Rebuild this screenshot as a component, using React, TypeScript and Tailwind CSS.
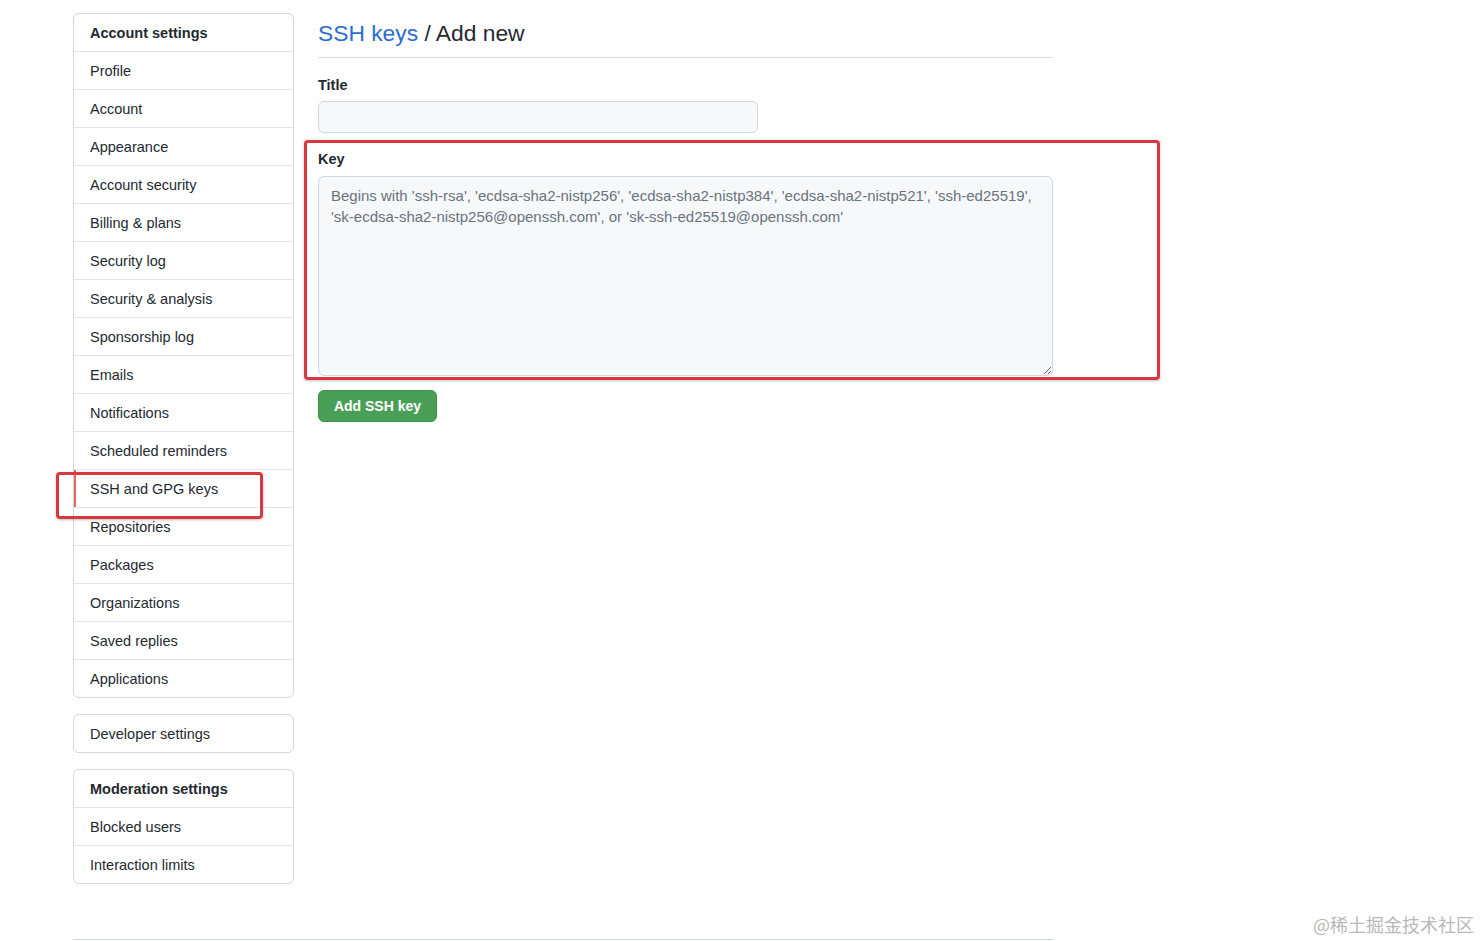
import React from "react";

// sidebar entries
const accountItems = [
  "Profile",
  "Account",
  "Appearance",
  "Account security",
  "Billing & plans",
  "Security log",
  "Security & analysis",
  "Sponsorship log",
  "Emails",
  "Notifications",
  "Scheduled reminders",
  "SSH and GPG keys",
  "Repositories",
  "Packages",
  "Organizations",
  "Saved replies",
  "Applications",
];

const moderationItems = ["Blocked users", "Interaction limits"];

function MenuRow({ label, heading, first, active }: { label: string; heading?: boolean; first?: boolean; active?: boolean }) {
  return (
    <div
      className={`relative flex items-center px-4 pt-[2px] text-[14.5px] text-[#24292f] ${first ? "h-[37px]" : "h-[38px] border-t border-[#e1e4e8]"} ${heading ? "font-bold" : ""}`}
    >
      {active && <span className="absolute left-0 top-0 h-full w-[2px] bg-[#e8695c]"></span>}
      {label}
    </div>
  );
}

export default function App() {
  return (
    <div
      className="relative min-h-[941px] w-[1480px] overflow-hidden bg-white text-[#24292f]"
      style={{ fontFamily: '"Liberation Sans", Arial, sans-serif' }}
    >
      <div className="ml-[73px] w-[980px] pt-[13px]">
        <div className="flex gap-[24px]">
          {/* SIDEBAR */}
          <div className="w-[221px] shrink-0">
            <div className="rounded-[6px] border border-[#d0d7de]">
              <MenuRow label="Account settings" heading first />
              {accountItems.map((item) => (
                <MenuRow key={item} label={item} active={item === "SSH and GPG keys"} />
              ))}
            </div>

            <div className="mt-[16px] rounded-[6px] border border-[#d0d7de]">
              <MenuRow label="Developer settings" first />
            </div>

            <div className="mt-[16px] rounded-[6px] border border-[#d0d7de]">
              <MenuRow label="Moderation settings" heading first />
              {moderationItems.map((item) => (
                <MenuRow key={item} label={item} />
              ))}
            </div>
          </div>

          {/* MAIN */}
          <div className="w-[735px] pt-[4px]">
            <h2 className="border-b border-[#d8dee4] pb-[7px] text-[22.8px] font-normal leading-[33px]">
              <span className="text-[#2a6dd2]">SSH keys</span> / Add new
            </h2>

            <form className="pt-[16px]">
              <label htmlFor="title" className="block text-[14.5px] font-bold leading-[22px]">
                Title
              </label>
              <input
                id="title"
                type="text"
                className="mt-[5px] block h-[32px] w-[440px] rounded-[6px] border border-[#d0d7de] bg-[#f6f8fa] px-3 text-[14px] outline-none"
              />

              <label htmlFor="key" className="mt-[15px] block text-[14.5px] font-bold leading-[22px]">
                Key
              </label>
              <textarea
                id="key"
                className="mt-[6px] block h-[200px] w-[735px] resize-y rounded-[6px] border border-[#d0d7de] bg-[#f6f8fa] px-[12px] py-[8px] text-[15px] leading-[21px] outline-none placeholder:text-[#6a737d]"
                placeholder="Begins with 'ssh-rsa', 'ecdsa-sha2-nistp256', 'ecdsa-sha2-nistp384', 'ecdsa-sha2-nistp521', 'ssh-ed25519', 'sk-ecdsa-sha2-nistp256@openssh.com', or 'sk-ssh-ed25519@openssh.com'"
              ></textarea>

              <button
                type="button"
                className="mt-[14px] h-[32px] w-[119px] rounded-[6px] border border-[#3f8f4b] bg-[#4a9f57] text-[14px] font-bold text-white"
              >
                Add SSH key
              </button>
            </form>
          </div>
        </div>

        <div className="mt-[55px] border-t border-[#d0d7de]"></div>
      </div>

      {/* annotation boxes */}
      <div className="absolute left-[304px] top-[140px] h-[240px] w-[856px] rounded-[4px] border-[3px] border-[#d9363e] shadow-[0_1px_3px_rgba(0,0,0,0.25)]"></div>
      <div className="absolute left-[56px] top-[472px] h-[47px] w-[207px] rounded-[4px] border-[3px] border-[#d9363e] shadow-[0_1px_3px_rgba(0,0,0,0.25)]"></div>

      {/* watermark */}
      <div
        className="absolute left-[1313px] top-[911px] text-[18px] text-[#b8b8b8]"
        style={{ fontFamily: '"Noto Sans CJK SC", sans-serif' }}
      >
        @稀土掘金技术社区
      </div>
    </div>
  );
}
